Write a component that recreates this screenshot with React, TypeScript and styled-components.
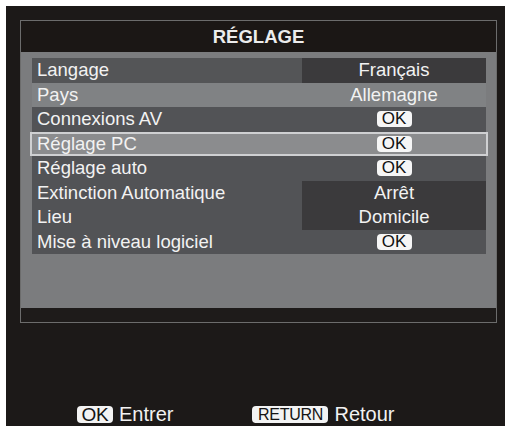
import styled, { createGlobalStyle } from "styled-components";

const GlobalStyle = createGlobalStyle`
  html, body {
    margin: 0;
    padding: 0;
    background: #ffffff;
  }
  body {
    font-family: "Liberation Sans", Arial, sans-serif;
  }
`;

type Tone = "mid" | "light" | "dark" | "selected";

interface MenuItem {
  label: string;
  value: string;
  tone: Tone;
  boxed?: boolean;
  button?: boolean;
}

const items: MenuItem[] = [
  { label: "Langage", value: "Français", tone: "mid", boxed: true },
  { label: "Pays", value: "Allemagne", tone: "light" },
  { label: "Connexions AV", value: "OK", tone: "dark", button: true },
  { label: "Réglage PC", value: "OK", tone: "selected", button: true },
  { label: "Réglage auto", value: "OK", tone: "dark", button: true },
  { label: "Extinction Automatique", value: "Arrêt", tone: "dark", boxed: true },
  { label: "Lieu", value: "Domicile", tone: "dark", boxed: true },
  { label: "Mise à niveau logiciel", value: "OK", tone: "dark", button: true },
];

const toneColors: Record<Tone, string> = {
  mid: "#545557",
  light: "#808284",
  dark: "#525356",
  selected: "#8b8c8e",
};

const Screen = styled.div`
  margin: 6px 0 0 6px;
  width: 499px;
  height: 420px;
  box-sizing: border-box;
  background: #1c1918;
  padding: 14px 0 0 14px;
  overflow: hidden;
`;

const Panel = styled.div`
  width: 477px;
  box-sizing: border-box;
  border: 1px solid #6c6c6c;
  background: #1b1715;
`;

const TitleBar = styled.div`
  height: 31px;
  display: flex;
  align-items: center;
  justify-content: center;
  color: #ececec;
  font-size: 18.5px;
  font-weight: bold;
  background: #1b1715;
`;

const MenuArea = styled.div`
  height: 256px;
  box-sizing: border-box;
  padding: 6px 10px 0 11px;
  background: #7b7c7e;
  display: flex;
  flex-direction: column;
`;

const Row = styled.div<{ $tone: Tone }>`
  height: 24.5px;
  box-sizing: border-box;
  display: flex;
  align-items: stretch;
  background: ${({ $tone }) => toneColors[$tone]};
  color: #f2f2f2;
  font-size: 18.5px;
  ${({ $tone }) =>
    $tone === "selected"
      ? `
    margin: 0 -2px;
    border: 2px solid #cfd0d2;
    line-height: 20.5px;
  `
      : `
    line-height: 24.5px;
  `}
`;

const Label = styled.div`
  flex: 1;
  padding-left: 5px;
  white-space: nowrap;
`;

const Value = styled.div<{ $boxed?: boolean }>`
  width: 184px;
  display: flex;
  align-items: center;
  justify-content: center;
  background: ${({ $boxed }) => ($boxed ? "#3b3a3c" : "transparent")};
`;

const OkBadge = styled.span`
  display: inline-flex;
  align-items: center;
  justify-content: center;
  width: 35px;
  height: 16px;
  border-radius: 4px;
  background: #f6f6f6;
  color: #111111;
  font-size: 17px;
  line-height: 16px;
`;

const InfoStrip = styled.div`
  height: 14px;
  background: #1e1b1a;
`;

const Footer = styled.div`
  display: flex;
  align-items: center;
  margin-top: 81px;
  padding-left: 57px;
  color: #f2f2f2;
  font-size: 20px;
`;

const KeyBadge = styled.span<{ $width: number; $size: number }>`
  display: inline-flex;
  align-items: center;
  justify-content: center;
  width: ${({ $width }) => $width}px;
  height: 17px;
  border-radius: 4px;
  background: #f3f3f3;
  color: #151515;
  font-size: ${({ $size }) => $size}px;
  line-height: 17px;
  letter-spacing: -0.3px;
`;

const KeyText = styled.span<{ $gap?: number }>`
  margin-left: 6px;
  margin-right: ${({ $gap }) => $gap ?? 0}px;
  line-height: 20px;
`;

export default function App() {
  return (
    <>
      <GlobalStyle />
      <Screen>
        <Panel>
          <TitleBar>RÉGLAGE</TitleBar>
          <MenuArea>
            {items.map((item) => (
              <Row key={item.label} $tone={item.tone}>
                <Label>{item.label}</Label>
                <Value $boxed={item.boxed}>
                  {item.button ? <OkBadge>{item.value}</OkBadge> : item.value}
                </Value>
              </Row>
            ))}
          </MenuArea>
          <InfoStrip />
        </Panel>
        <Footer>
          <KeyBadge $width={36} $size={19}>
            OK
          </KeyBadge>
          <KeyText $gap={79}>Entrer</KeyText>
          <KeyBadge $width={76} $size={16}>
            RETURN
          </KeyBadge>
          <KeyText>Retour</KeyText>
        </Footer>
      </Screen>
    </>
  );
}
